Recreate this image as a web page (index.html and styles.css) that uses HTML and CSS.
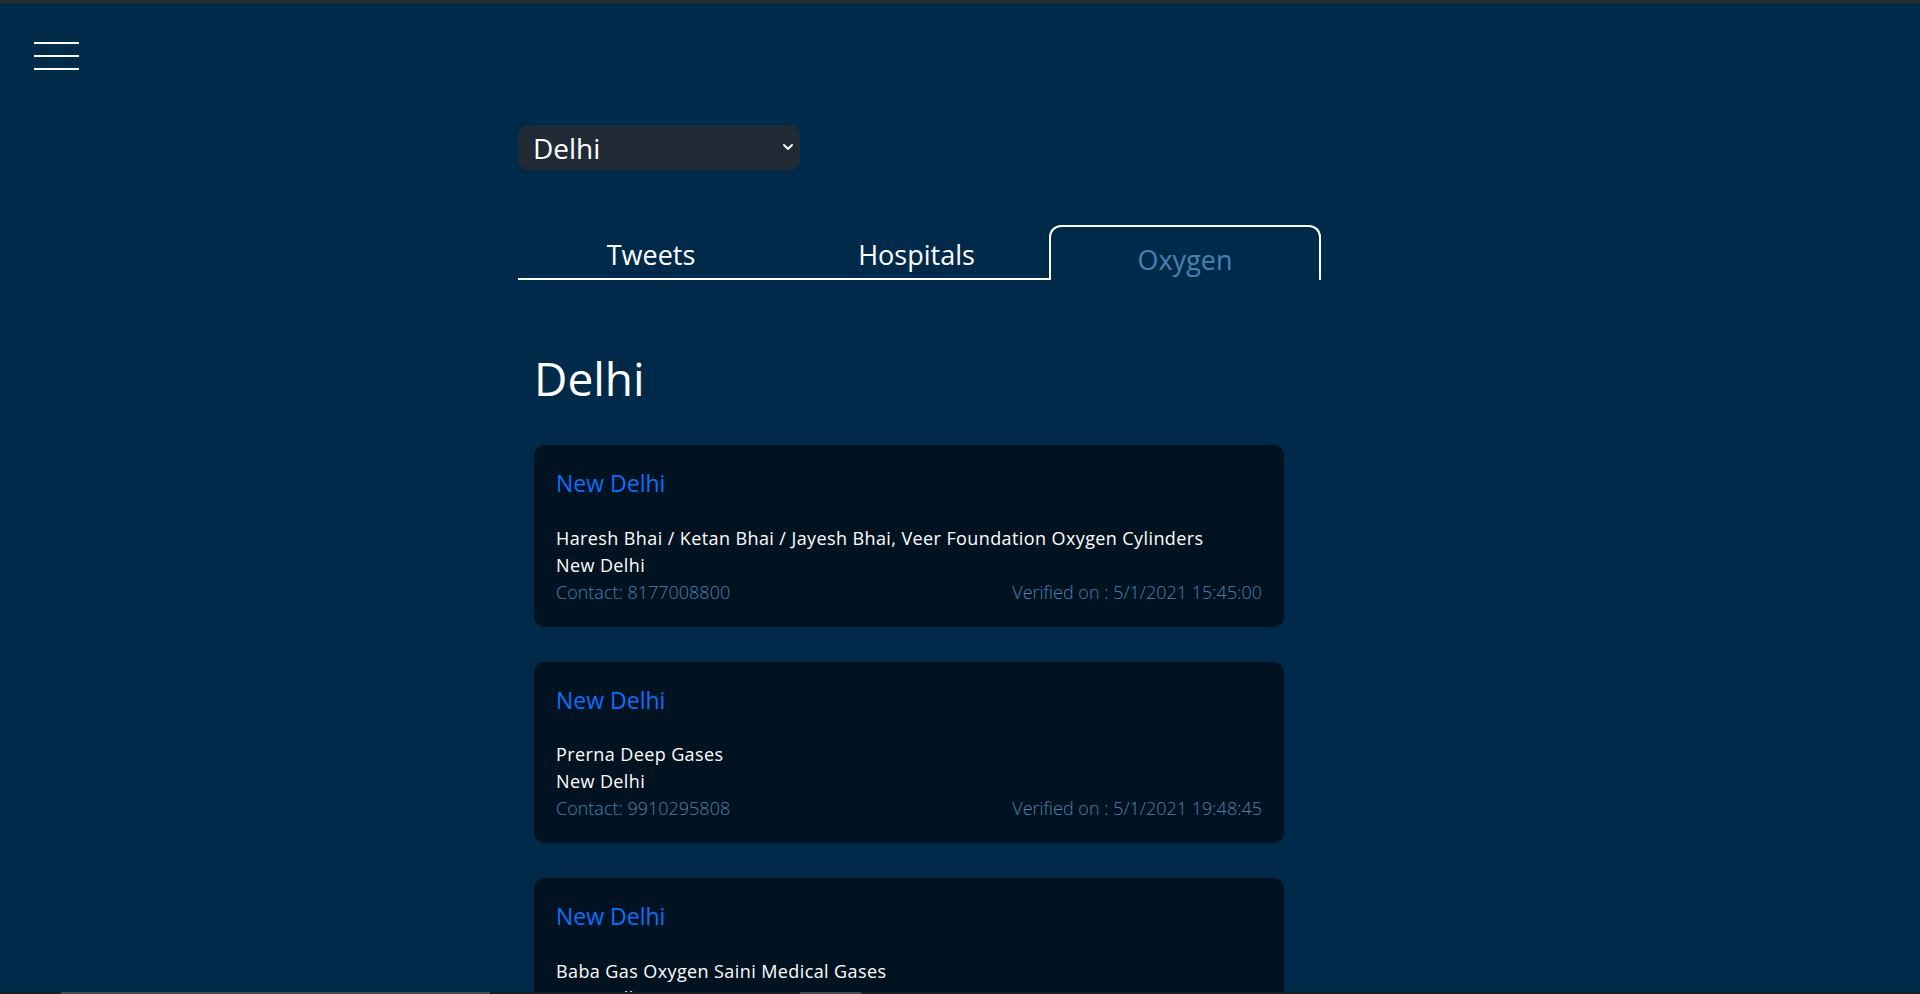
FILE: index.html
```html
<!DOCTYPE html>
<html lang="en">
<head>
<meta charset="utf-8">
<title>Oxygen - Delhi</title>
<link rel="stylesheet" href="styles.css">
</head>
<body>
<div class="chrome-top"></div>
<header class="topbar">
  <button class="menu-btn" aria-label="Menu">
    <span class="bar"></span><span class="bar"></span><span class="bar"></span>
  </button>
</header>
<main class="main">
  <div class="select">
    <span class="select-value">Delhi</span>
    <svg class="chevron" width="10" height="6" viewBox="0 0 10 6"><path d="M1 1 L5 5 L9 1" fill="none" stroke="#fff" stroke-width="1.8" stroke-linecap="round" stroke-linejoin="round"/></svg>
  </div>
  <nav class="tabs">
    <div class="tab">Tweets</div>
    <div class="tab">Hospitals</div>
    <div class="tab tab-active">Oxygen</div>
  </nav>
  <section class="content">
    <h1 class="city">Delhi</h1>
    <div class="cards">
      <article class="card">
        <h5 class="card-title">New Delhi</h5>
        <p class="line">Haresh Bhai / Ketan Bhai / Jayesh Bhai, Veer Foundation Oxygen Cylinders</p>
        <p class="line">New Delhi</p>
        <div class="meta"><span>Contact: 8177008800</span><span>Verified on : 5/1/2021 15:45:00</span></div>
      </article>
      <article class="card">
        <h5 class="card-title">New Delhi</h5>
        <p class="line">Prerna Deep Gases</p>
        <p class="line">New Delhi</p>
        <div class="meta"><span>Contact: 9910295808</span><span>Verified on : 5/1/2021 19:48:45</span></div>
      </article>
      <article class="card">
        <h5 class="card-title">New Delhi</h5>
        <p class="line">Baba Gas Oxygen Saini Medical Gases</p>
        <p class="line">New Delhi</p>
      </article>
    </div>
  </section>
</main>
<div class="chrome-bottom">
  <span class="sb sb-dark s1"></span><span class="sb sb-light s2"></span><span class="sb sb-dark s3"></span><span class="sb sb-light s4"></span><span class="sb sb-dark s5"></span>
</div>
</body>
</html>
```
FILE: styles.css
```css
html {
  scrollbar-width: none;
}
html::-webkit-scrollbar, body::-webkit-scrollbar {
  display: none;
}
body {
  margin: 0;
  background: #002a4a;
  color: #fff;
  font-family: "Open Sans", "Noto Sans", sans-serif;
  overflow: hidden;
  height: 994px;
}
.chrome-top {
  position: fixed;
  top: 0;
  left: 0;
  right: 0;
  height: 3px;
  background: #2b2b2b;
  z-index: 10;
}
.chrome-bottom {
  position: fixed;
  left: 0;
  right: 0;
  bottom: 0;
  height: 2px;
  display: flex;
  z-index: 10;
}
.sb { height: 2px; display: block; }
.sb-dark { background: #1e1e1e; }
.sb-light { background: #4a4a4a; }
.s1 { width: 61px; }
.s2 { width: 429px; }
.s3 { width: 310px; }
.s4 { width: 61px; }
.s5 { flex: 1; }

.topbar {
  padding: 42px 0 0 34px;
  height: 83px;
  box-sizing: border-box;
}
.menu-btn {
  display: flex;
  flex-direction: column;
  gap: 11px;
  padding: 0;
  border: 0;
  background: transparent;
  cursor: pointer;
}
.bar {
  display: block;
  width: 45px;
  height: 2px;
  background: #fff;
}

.main {
  margin-left: 518px;
  width: 803px;
  padding-top: 42px;
}
.select {
  width: 282px;
  height: 45px;
  box-sizing: border-box;
  background: #212b36;
  border-radius: 10px;
  display: flex;
  align-items: center;
  justify-content: space-between;
  padding: 0 7px 0 15px;
}
.select-value {
  font-size: 28px;
  line-height: 1;
  font-weight: 400;
}
.chevron {
  display: block;
  margin-top: -2px;
}

.tabs {
  margin-top: 55px;
  display: grid;
  grid-template-columns: 266px 265px 272px;
  align-items: end;
  height: 55px;
}
.tab {
  font-size: 27px;
  line-height: 1.2;
  text-align: center;
  border-bottom: 2px solid #fff;
  padding-bottom: 7px;
  color: #fff;
}
.tab-active {
  border: 2px solid #fff;
  border-bottom: none;
  border-radius: 12px 12px 0 0;
  padding: 17px 0 4px;
  color: #4682b4;
}

.content {
  padding-left: 16px;
}
.city {
  margin: 71px 0 39px;
  font-size: 46px;
  line-height: 1.2;
  font-weight: 400;
}
.cards {
  display: flex;
  flex-direction: column;
  gap: 35px;
}
.card {
  width: 750px;
  box-sizing: border-box;
  background: #011320;
  border-radius: 10px;
  padding: 25px 22px 21px;
}
.card-title {
  margin: 0 0 27px;
  font-size: 23px;
  line-height: 1.2;
  font-weight: 400;
  color: #0d6efd;
}
.line {
  margin: 0;
  font-size: 18px;
  line-height: 27px;
  font-weight: 500;
  letter-spacing: 0.4px;
}
.meta {
  display: flex;
  justify-content: space-between;
  font-size: 18px;
  line-height: 27px;
  font-weight: 300;
  color: #4682b4;
}
```
